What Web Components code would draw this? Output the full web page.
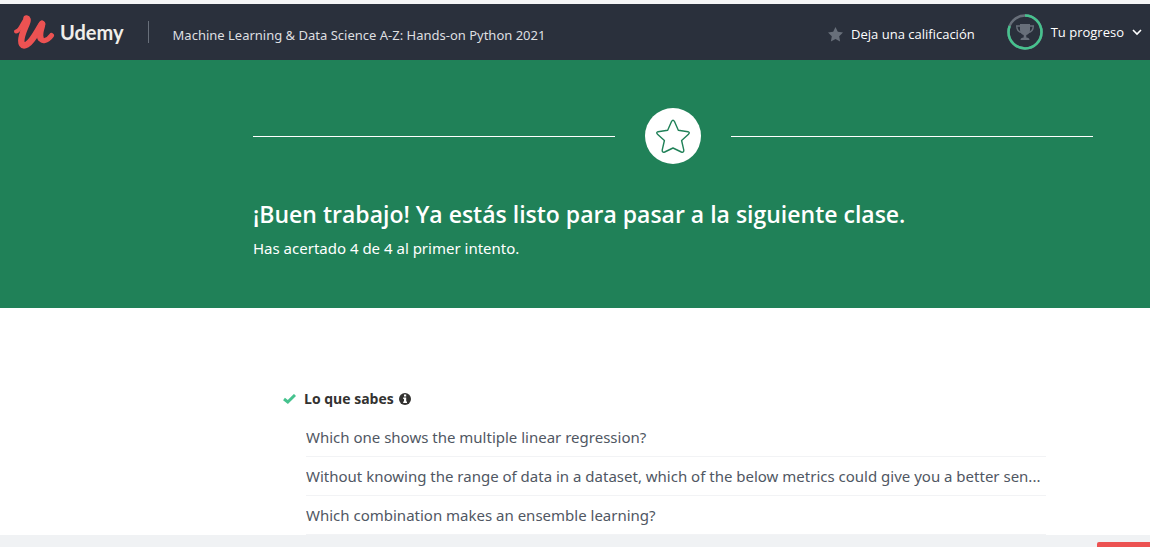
<!DOCTYPE html>
<html lang="es">
<head>
<meta charset="utf-8">
<meta name="viewport" content="width=device-width, initial-scale=1">
<title>Udemy</title>
<style>
  html, body { margin: 0; height: 100%; }
  body { font-family: "Noto Sans", "Open Sans", sans-serif; background: #fff; }
</style>
</head>
<body>
<quiz-page></quiz-page>

<script>
const define = (name, markup) => {
  const template = document.createElement('template');
  template.innerHTML = markup;
  customElements.define(name, class extends HTMLElement {
    constructor() {
      super();
      this.attachShadow({ mode: 'open' }).append(template.content.cloneNode(true));
    }
  });
};

define('udemy-logo', `
  <style>
    :host { display: block; }
    a { display: flex; align-items: center; gap: 5px; color: #f0eeea; text-decoration: none; font: 700 20px/24px Lato, sans-serif; }
    svg { display: block; flex: none; }
  </style>
  <a href="#">
    <svg width="42" height="36" viewBox="0 0 42 36" fill="none" stroke="#ec5252" stroke-linecap="round" stroke-linejoin="round" aria-hidden="true">
      <path stroke-width="4" d="M3 17.500C7 17 9 10 12 6"/>
      <path stroke-width="6.500" d="M13.500 4.500C17 5 11 14 9 22C7 30 9.500 33 14 30.500C20 27 24 17 29 10"/>
      <path stroke-width="6.500" d="M29 10C30 11 25.500 18 27.500 24"/>
      <path stroke-width="5" d="M27 23C28.500 29 34.500 27 38.500 21.500"/>
    </svg>
    <span>Udemy</span>
  </a>`);

define('rate-link', `
  <style>
    :host { display: block; }
    button { display: flex; align-items: center; gap: 8px; padding: 0; border: 0; background: none; color: #fff; font: 400 13px/20px "Open Sans", sans-serif; white-space: nowrap; }
    svg { display: block; }
  </style>
  <button type="button">
    <svg width="15" height="15" viewBox="0 0 15 15" fill="#686f7a" aria-hidden="true"><path d="M7.500 0L9.800 4.800L15 5.500L11.200 9.200L12.100 14.600L7.500 12L2.900 14.600L3.800 9.200L0 5.500L5.200 4.800Z"/></svg>
    <span><slot></slot></span>
  </button>`);

define('progress-menu', `
  <style>
    :host { display: block; }
    button { display: flex; align-items: center; gap: 8px; padding: 0; border: 0; background: none; color: #fff; font: 400 13px/20px "Open Sans", sans-serif; white-space: nowrap; }
    svg { display: block; }
  </style>
  <button type="button">
    <svg width="36" height="36" viewBox="0 0 36 36" fill="none" aria-hidden="true">
      <circle cx="18" cy="18" r="16.500" stroke="#686f7a" stroke-width="2.500"/>
      <circle cx="18" cy="18" r="16.500" stroke="#46c28e" stroke-width="2.500" pathLength="100" stroke-dasharray="81 19" transform="rotate(-90 18 18)"/>
      <path fill="#686f7a" d="M13 10H23V16C23 19 21 20.500 19.300 21V23.500C21.500 23.500 22.500 24.500 22.500 26H13.500C13.500 24.500 14.500 23.500 16.700 23.500V21C15 20.500 13 19 13 16Z"/>
      <path stroke="#686f7a" stroke-width="1.400" d="M13 12H9.700C9.700 16 11.500 18 15 18.500M23 12H26.300C26.300 16 24.500 18 21 18.500"/>
    </svg>
    <span><slot></slot></span>
    <svg width="10" height="8" viewBox="0 0 10 8" fill="none" stroke="#fff" stroke-width="1.600" aria-hidden="true"><path d="M1 2L5 6L9 2"/></svg>
  </button>`);

define('course-header', `
  <style>
    :host { display: flex; align-items: center; height: 56px; box-sizing: border-box; padding: 0 8px 0 13px; background: #2a303c; }
    .rule { width: 1px; height: 22px; margin-left: 24px; background: #686f7a; flex: none; }
    .title { min-width: 0; flex: 1; padding: 6px 0 0 24px; color: #dedfe0; font-size: 13px; line-height: 22px; white-space: nowrap; overflow: hidden; text-overflow: ellipsis; }
    a { color: inherit; text-decoration: none; }
    rate-link { margin-right: 32px; padding-top: 4px; }
  </style>
  <udemy-logo></udemy-logo>
  <span class="rule"></span>
  <div class="title"><a href="#"><slot></slot></a></div>
  <rate-link>Deja una calificación</rate-link>
  <progress-menu>Tu progreso</progress-menu>`);

define('result-banner', `
  <style>
    :host { display: block; background: #208158; color: #fff; padding: 48px 0 47px 196px; }
    .inner { max-width: 840px; margin: 0 auto; }
    .badge { display: flex; align-items: center; gap: 30px; margin-bottom: 34px; }
    .badge::before, .badge::after { content: ""; flex: 1; height: 1px; background: #fff; }
    .circle { display: grid; place-items: center; width: 56px; height: 56px; border-radius: 50%; background: #fff; }
    h1 { margin: 0; font-family: "Open Sans", sans-serif; font-size: 23px; line-height: 32px; font-weight: 650; }
    p { margin: 5px 0 0; font-size: 15px; line-height: 26px; }
  </style>
  <div class="inner">
    <div class="badge">
      <span class="circle"><svg width="36" height="36" viewBox="0 0 36 36" fill="none" stroke="#208158" stroke-width="1.400" stroke-linejoin="round" aria-hidden="true"><path d="M16.500 3.500Q18 1 19.500 3.500L23.300 12.300L33 13.700Q35.300 14.500 33.500 16.200L26.600 22.500L28.800 32.200Q28.800 35 26.300 34L18 30L9.700 34Q7.200 35 7.200 32.200L9.400 22.500L2.500 16.200Q.7 14.500 3 13.700L12.700 12.300Z"/></svg></span>
    </div>
    <h1><slot name="heading"></slot></h1>
    <p><slot></slot></p>
  </div>`);

define('known-topics', `
  <style>
    :host { display: block; padding: 80px 0 0 196px; }
    .inner { max-width: 840px; margin: 0 auto; padding: 0 47px 0 30px; box-sizing: border-box; }
    h2 { display: flex; align-items: center; margin: 0; color: #333230; font-family: "Open Sans", sans-serif; font-size: 14px; line-height: 22px; font-weight: 700; }
    svg { display: block; flex: none; }
    .check { margin-right: 8px; }
    .info { margin-left: 5px; }
    ul { list-style: none; margin: 8px 0 0; padding: 0 0 0 23px; }
    ::slotted(li) { height: 38px; border-bottom: 1px solid #f2f3f5; color: #505763; font-size: 15px; line-height: 38px; white-space: nowrap; overflow: hidden; text-overflow: ellipsis; }
  </style>
  <div class="inner">
    <h2>
      <svg class="check" width="13" height="10" viewBox="0 0 13 10" fill="none" stroke="#46c28e" stroke-width="3" aria-hidden="true"><path d="M1 5L4.800 8L12 1"/></svg>
      <span>Lo que sabes</span>
      <svg class="info" width="12" height="12" viewBox="0 0 12 12" aria-hidden="true"><circle cx="6" cy="6" r="6" fill="#333230"/><path fill="#fff" d="M5 1.500H7.200V3.500H5ZM4.200 4.500H7.200V8.500H8V10H4.200V8.500H5V6H4.200Z"/></svg>
    </h2>
    <ul><slot></slot></ul>
  </div>`);

define('quiz-footer', `
  <style>
    :host { display: flex; justify-content: flex-end; height: 12px; padding-top: 7px; box-sizing: border-box; overflow: hidden; background: #f0f2f4; }
    button { width: 53px; height: 34px; flex: none; padding: 0; border: 0; border-radius: 2px 0 0 2px; background: #ec5252; }
  </style>
  <button type="button" aria-label="Continuar"></button>`);

define('quiz-page', `
  <style>
    :host { display: grid; grid-template-rows: auto minmax(0, 1fr) auto; height: 100vh; border-top: 4px solid #f4f5f6; box-sizing: border-box; }
    main { overflow: hidden; min-width: 0; }
  </style>
  <course-header>Machine Learning &amp; Data Science A-Z: Hands-on Python 2021</course-header>
  <main>
    <result-banner>
      <span slot="heading">¡Buen trabajo! Ya estás listo para pasar a la siguiente clase.</span>
      Has acertado 4 de 4 al primer intento.
    </result-banner>
    <known-topics>
      <li>Which one shows the multiple linear regression?</li>
      <li>Without knowing the range of data in a dataset, which of the below metrics could give you a better sen...</li>
      <li>Which combination makes an ensemble learning?</li>
    </known-topics>
  </main>
  <quiz-footer></quiz-footer>`);
</script>
</body>
</html>
